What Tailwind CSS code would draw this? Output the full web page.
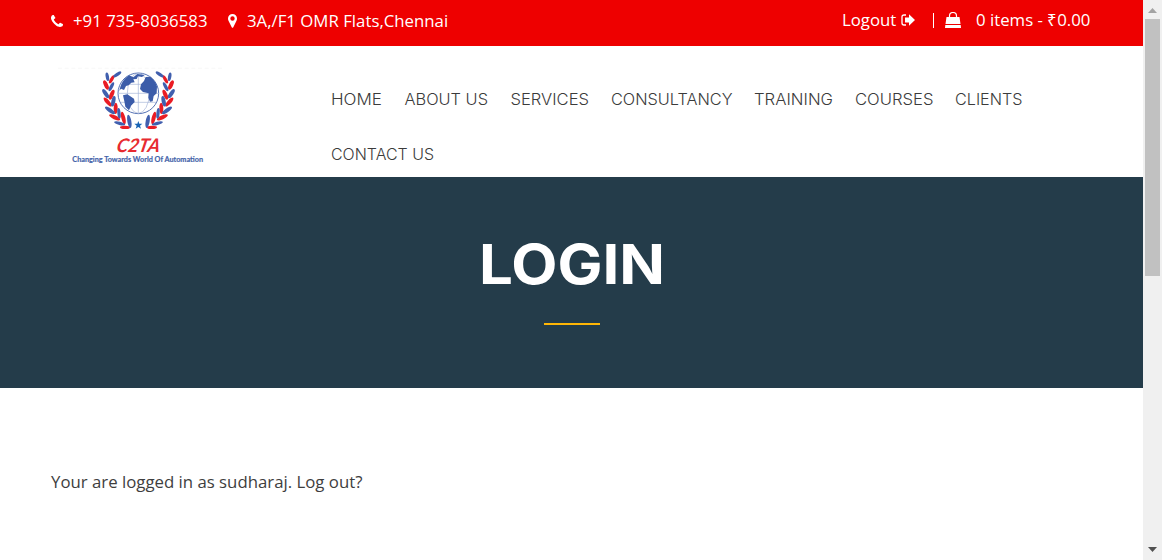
<!DOCTYPE html>
<html lang="en">
<head>
<meta charset="utf-8">
<title>Login</title>
<script src="https://cdn.jsdelivr.net/npm/@tailwindcss/browser@4"></script>
</head>
<body class="flex h-[560px] w-[1162px] overflow-hidden bg-white font-['Open_Sans',sans-serif] text-[16.800px] text-[#3e3e3e]">
<div class="flex w-[1143px] flex-col">
  <header class="flex h-[46px] items-start justify-between bg-[#ee0000] pl-[51px] pr-[53px] leading-6 text-white">
    <div class="flex items-center pt-[9px]">
      <svg class="h-[12px] w-[12px]" viewBox="0 0 1408 1408" fill="currentColor"><path d="M1408 1112q0 27-10 70.500t-21 68.500q-21 50-122 106-94 51-186 51-27 0-52.500-3.500t-57.500-12.500-47.500-14.500-55.500-20.500-49-18q-98-35-175-83-128-79-264.500-215.500T151 776q-48-77-83-175-3-9-18-49t-20.500-55.500T15 449 2.500 391.500 0 339q0-92 51-186 56-101 106-122 25-11 68.500-21T296 0q14 0 21 3 18 6 53 76 11 19 30 54t35 63.500 31 53.500q3 4 17.500 25t21.500 35.500 7 28.500q0 20-28.500 50t-62 55-62 53-28.500 46q0 9 5 22.500t8.500 20.500 14 24 11.500 19q76 137 174 235t235 174q2 1 19 11.500t24 14 20.500 8.500 22.500 5q18 0 46-28.500t53-62 55-62 50-28.500q14 0 28.500 7t35.500 21.500 25 17.500q25 15 53.500 31t63.500 35 54 30q70 35 76 53 3 7 3 21z"/></svg>
      <span class="ml-[10px] w-[136px] whitespace-nowrap">+91 735-8036583</span>
      <svg class="ml-[19px] h-[14px] w-[9px]" viewBox="0 0 9 14" fill="currentColor"><path fill-rule="evenodd" d="M4.500 0A4.500 4.500 0 0 1 9 4.500C9 6 8.500 6.700 8 7.700L5.300 13.300Q4.500 14.400 3.700 13.300L1 7.700C.5 6.700 0 6 0 4.500A4.500 4.500 0 0 1 4.500 0ZM4.500 2.300a2.200 2.200 0 1 0 0 4.400a2.200 2.200 0 0 0 0-4.400Z"/></svg>
      <span class="ml-[10px] whitespace-nowrap">3A,/F1 OMR Flats,Chennai</span>
    </div>
    <div class="flex items-center pt-[8px]">
      <span class="w-[55px]">Logout</span>
      <svg class="ml-[4px] h-[12px] w-[14px]" viewBox="0 0 14 12"><path d="M5 1H3Q1 1 1 3v6q0 2 2 2h2" fill="none" stroke="white" stroke-width="1.300"/><path d="M8 .3 14 6 8 11.700V8.500H4V3.500H8Z" fill="white"/></svg>
      <span class="ml-[18px] h-[15px] w-px bg-white"></span>
      <svg class="ml-[11px] h-[16px] w-[16px]" viewBox="0 0 16 16"><path d="M4.500 6V4a3.500 3.500 0 0 1 7 0v2" fill="none" stroke="white" stroke-width="1.200"/><path d="M1.500 5h13l1 7H.5ZM.3 13h15.400L16 16H0Z" fill="white"/></svg>
      <span class="ml-[15px] w-[114px] whitespace-nowrap">0 items - ₹0.00</span>
    </div>
  </header>

  <div class="flex h-[131px] items-start pl-[50px]">
    <svg class="mt-[14px] h-[115px] w-[180px]" viewBox="0 0 540 345">
      <path d="M24 25H516" stroke="#f5f5f5" stroke-width="2" stroke-dasharray="12 8"/>
      <defs>
        <g id="leaves">
          <g fill="#ea1c24">
            <ellipse cx="185" cy="58" rx="5" ry="14" transform="rotate(30 185 58)"/>
            <ellipse cx="168" cy="75" rx="6" ry="15" transform="rotate(-26 168 75)"/>
            <ellipse cx="185" cy="104" rx="6" ry="16" transform="rotate(24 185 104)"/>
            <ellipse cx="173" cy="126" rx="6" ry="17" transform="rotate(-42 173 126)"/>
            <ellipse cx="197" cy="145" rx="6" ry="17" transform="rotate(2 197 145)"/>
            <ellipse cx="194" cy="172" rx="6" ry="18" transform="rotate(-65 194 172)"/>
            <ellipse cx="220" cy="174" rx="6" ry="19" transform="rotate(-14 220 174)"/>
            <ellipse cx="225" cy="202" rx="5" ry="15" transform="rotate(-88 225 202)"/>
          </g>
          <g fill="#405fae">
            <ellipse cx="202" cy="43" rx="5" ry="14" transform="rotate(55 202 43)"/>
            <ellipse cx="172" cy="50" rx="5" ry="13" transform="rotate(-10 172 50)"/>
            <ellipse cx="184" cy="80" rx="5" ry="15" transform="rotate(28 184 80)"/>
            <ellipse cx="167" cy="101" rx="6" ry="16" transform="rotate(-34 167 101)"/>
            <ellipse cx="190" cy="124" rx="6" ry="16" transform="rotate(12 190 124)"/>
            <ellipse cx="180" cy="151" rx="6" ry="18" transform="rotate(-55 180 151)"/>
            <ellipse cx="207" cy="160" rx="5" ry="16" transform="rotate(-6 207 160)"/>
            <ellipse cx="209" cy="190" rx="5" ry="17" transform="rotate(-76 209 190)"/>
            <ellipse cx="238" cy="184" rx="6" ry="20" transform="rotate(-10 238 184)"/>
          </g>
        </g>
      </defs>
      <use href="#leaves"/>
      <use href="#leaves" transform="translate(531 0) scale(-1 1)"/>
      <circle cx="265" cy="100" r="61" fill="white" stroke="#5673b5" stroke-width="3"/>
      <g fill="none" stroke="#a4b3d7" stroke-width="2"><path d="M265 40V160M205 100H325M212 73H318M212 127H318"/><ellipse cx="265" cy="100" rx="33" ry="60"/></g>
      <g fill="#3b5ca9">
        <path d="M212 77Q222 54 238 46L250 52L262 42L284 45L276 51L264 49L260 57L250 58L254 67L244 68L236 76L228 78L222 90L213 86L208 92Z"/>
        <path d="M219 106L232 103L252 116L254 126L243 137L237 151L226 140L223 124Z"/>
        <path d="M282 63L287 51L301 50Q316 62 321 79L320 100L311 108L308 124L300 125L295 113L296 100L279 96L270 87L273 73Z"/>
      </g>
      <path d="m265 183 3 8h9l-7 6 3 9-8-5-8 5 3-9-7-6h9z" fill="#1864b5"/>
      <text transform="translate(197 275) skewX(-12)" font-family="Lato" font-style="italic" font-weight="700" font-size="56" fill="#e72a30" textLength="130" lengthAdjust="spacingAndGlyphs">C2TA</text>
      <text x="67" y="306" font-family="Lato" font-weight="700" font-size="21" fill="#4463a9" stroke="#4463a9" stroke-width=".5" textLength="392" lengthAdjust="spacingAndGlyphs">Changing Towards World Of Automation</text>
    </svg>
    <nav class="ml-[101px] mt-[26px] flex w-[720px] flex-wrap gap-x-[23px] fill-[#3b3b3b] font-['Inter',sans-serif] text-[15.200px] font-light">
      <a href="#"><svg class="h-[55px] w-[51px] overflow-visible"><text x="0" y="33" textLength="51" lengthAdjust="spacingAndGlyphs">HOME</text></svg></a>
      <a href="#"><svg class="h-[55px] w-[83px] overflow-visible"><text x="-.5" y="33" textLength="83.500" lengthAdjust="spacingAndGlyphs">ABOUT US</text></svg></a>
      <a href="#"><svg class="h-[55px] w-[78px] overflow-visible"><text x="-.5" y="33" textLength="78.500" lengthAdjust="spacingAndGlyphs">SERVICES</text></svg></a>
      <a href="#"><svg class="h-[55px] w-[120px] overflow-visible"><text x="-1" y="33" textLength="121.500" lengthAdjust="spacingAndGlyphs">CONSULTANCY</text></svg></a>
      <a href="#"><svg class="h-[55px] w-[78px] overflow-visible"><text x="-1" y="33" textLength="79" lengthAdjust="spacingAndGlyphs">TRAINING</text></svg></a>
      <a href="#"><svg class="h-[55px] w-[77px] overflow-visible"><text x="-1" y="33" textLength="78.500" lengthAdjust="spacingAndGlyphs">COURSES</text></svg></a>
      <a href="#"><svg class="h-[55px] w-[67px] overflow-visible"><text x="-1" y="33" textLength="67.500" lengthAdjust="spacingAndGlyphs">CLIENTS</text></svg></a>
      <a href="#"><svg class="h-[55px] w-[103px] overflow-visible"><text x="0" y="33" textLength="103" lengthAdjust="spacingAndGlyphs">CONTACT US</text></svg></a>
    </nav>
  </div>

  <section class="flex h-[211px] flex-col items-center bg-[#243c4a] pt-[57px]">
    <h1><svg class="h-[60px] w-[188px] overflow-visible fill-white font-['Inter',sans-serif] text-[55px] font-bold"><text x="1" y="50" textLength="186" lengthAdjust="spacingAndGlyphs">LOGIN</text></svg></h1>
    <div class="mt-[29px] h-[2px] w-[56px] bg-[#ffb606]"></div>
  </section>

  <main class="pl-[51px] pt-[82px] leading-6"><p class="w-[312px] whitespace-nowrap">Your are logged in as sudharaj. Log out?</p></main>
</div>
<aside class="flex w-[19px] flex-col items-center bg-[#f0f0f0]">
  <svg class="mt-[8px] h-[5px] w-[9px]" viewBox="0 0 9 5" fill="#a3a3a3"><path d="M4.500 0 9 5H0z"/></svg>
  <div class="mt-[6px] h-[257px] w-[15px] bg-[#c1c1c1]"></div>
  <svg class="mt-auto mb-[8px] h-[5px] w-[9px]" viewBox="0 0 9 5" fill="#505050"><path d="M0 0h9L4.500 5z"/></svg>
</aside>
</body>
</html>
